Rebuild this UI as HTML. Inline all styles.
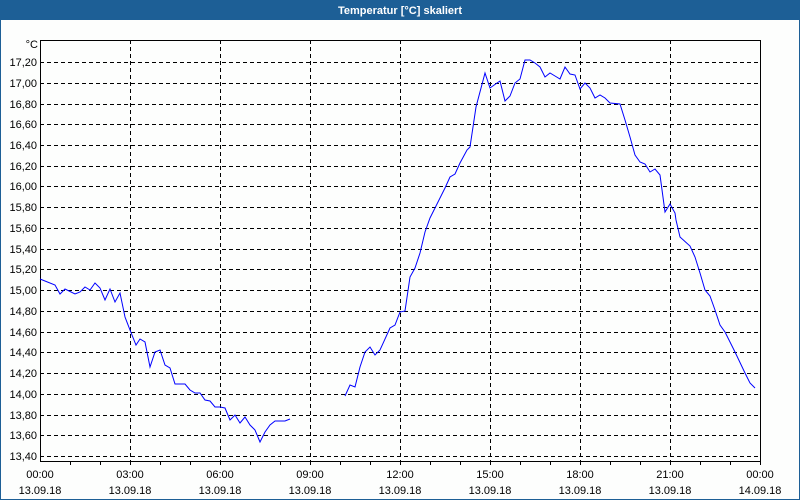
<!DOCTYPE html>
<html><head><meta charset="utf-8"><style>
html,body{margin:0;padding:0;width:800px;height:500px;overflow:hidden;background:#fff}
svg{display:block}
text{font-family:"Liberation Sans",sans-serif;font-size:11px;fill:#000}
</style></head><body>
<svg width="800" height="500" xmlns="http://www.w3.org/2000/svg">
<rect x="0" y="0" width="800" height="500" fill="#1d5f96"/>
<rect x="1" y="20" width="798" height="479" fill="#fdfefd"/>
<text x="400" y="14" text-anchor="middle" style="font-weight:bold;fill:#fff">Temperatur [°C] skaliert</text>
<g stroke="#000" stroke-width="1" stroke-dasharray="4,3" fill="none">
<path d="M40 62.5H760M40 83.5H760M40 104.5H760M40 124.5H760M40 145.5H760M40 166.5H760M40 186.5H760M40 207.5H760M40 228.5H760M40 249.5H760M40 269.5H760M40 290.5H760M40 311.5H760M40 332.5H760M40 352.5H760M40 373.5H760M40 394.5H760M40 415.5H760M40 435.5H760M40 456.5H760"/>
<path d="M130.5 40V461M220.5 40V461M310.5 40V461M400.5 40V461M490.5 40V461M580.5 40V461M670.5 40V461"/>
</g>
<g stroke="#000" stroke-width="1" fill="none">
<path d="M40.5 40V461.5M40 40.5H760.5V461.5M40 461.5H760.5"/>
<path d="M70.5 461v4M100.5 461v4M130.5 461v4M160.5 461v4M190.5 461v4M220.5 461v4M250.5 461v4M280.5 461v4M310.5 461v4M340.5 461v4M370.5 461v4M400.5 461v4M430.5 461v4M460.5 461v4M490.5 461v4M520.5 461v4M550.5 461v4M580.5 461v4M610.5 461v4M640.5 461v4M670.5 461v4M700.5 461v4M730.5 461v4M760.5 461v4"/>
</g>
<g stroke="#0000ff" stroke-width="1" fill="none">
<polyline points="40,279 55,285 60,294 65,289 75,294 80,292 85,287 90,290 95,283 100,288 105,300 110,289 115,302 120,293 125,317 130,330 136,345 140,339 145,342 150,367 155,352 160,350 165,365 170,368 175,384 185,384 190,390 195,393 200,393 205,400 210,401 215,407 220,407 225,408 230,420 235,415 240,423 245,417 250,425 255,430 260,442 265,432 270,425 275,421 285,421 290,419"/>
<polyline points="345,396 350,385 355,387 360,367 365,352 370,347 375,355 380,350 390,328 395,325 400,312 405,311 410,277 415,268 420,253 425,232 430,218 435,208 440,198 445,188 450,177 455,174 460,163 467,150 470,147 476,107 485,73 490,88 497,83 500,81 505,101 510,96 515,83 520,79 525,60 530,60 535,63 540,67 545,77 550,73 555,76 560,79 565,67 570,74 575,75 580,89 585,83 590,88 595,98 600,95 605,98 610,103 620,104 625,120 630,137 635,155 640,162 645,164 650,172 655,169 660,175 665,212 670,204 675,213 676,220 680,237 690,246 695,257 700,273 705,290 710,296 715,310 720,325 725,332 735,352 745,373 750,383 755,388"/>
</g>
<g text-anchor="end">
<text x="38" y="48">°C</text>
<text x="37" y="66">17,20</text><text x="37" y="87">17,00</text><text x="37" y="108">16,80</text><text x="37" y="128">16,60</text><text x="37" y="149">16,40</text><text x="37" y="170">16,20</text><text x="37" y="190">16,00</text><text x="37" y="211">15,80</text><text x="37" y="232">15,60</text><text x="37" y="253">15,40</text><text x="37" y="273">15,20</text><text x="37" y="294">15,00</text><text x="37" y="315">14,80</text><text x="37" y="336">14,60</text><text x="37" y="356">14,40</text><text x="37" y="377">14,20</text><text x="37" y="398">14,00</text><text x="37" y="419">13,80</text><text x="37" y="439">13,60</text><text x="37" y="460">13,40</text>
</g>
<g text-anchor="middle">
<text x="40" y="478">00:00</text><text x="40" y="494">13.09.18</text>
<text x="130" y="478">03:00</text><text x="130" y="494">13.09.18</text>
<text x="220" y="478">06:00</text><text x="220" y="494">13.09.18</text>
<text x="310" y="478">09:00</text><text x="310" y="494">13.09.18</text>
<text x="400" y="478">12:00</text><text x="400" y="494">13.09.18</text>
<text x="490" y="478">15:00</text><text x="490" y="494">13.09.18</text>
<text x="580" y="478">18:00</text><text x="580" y="494">13.09.18</text>
<text x="670" y="478">21:00</text><text x="670" y="494">13.09.18</text>
<text x="760" y="478">00:00</text><text x="760" y="494">14.09.18</text>
</g>
</svg>
</body></html>
